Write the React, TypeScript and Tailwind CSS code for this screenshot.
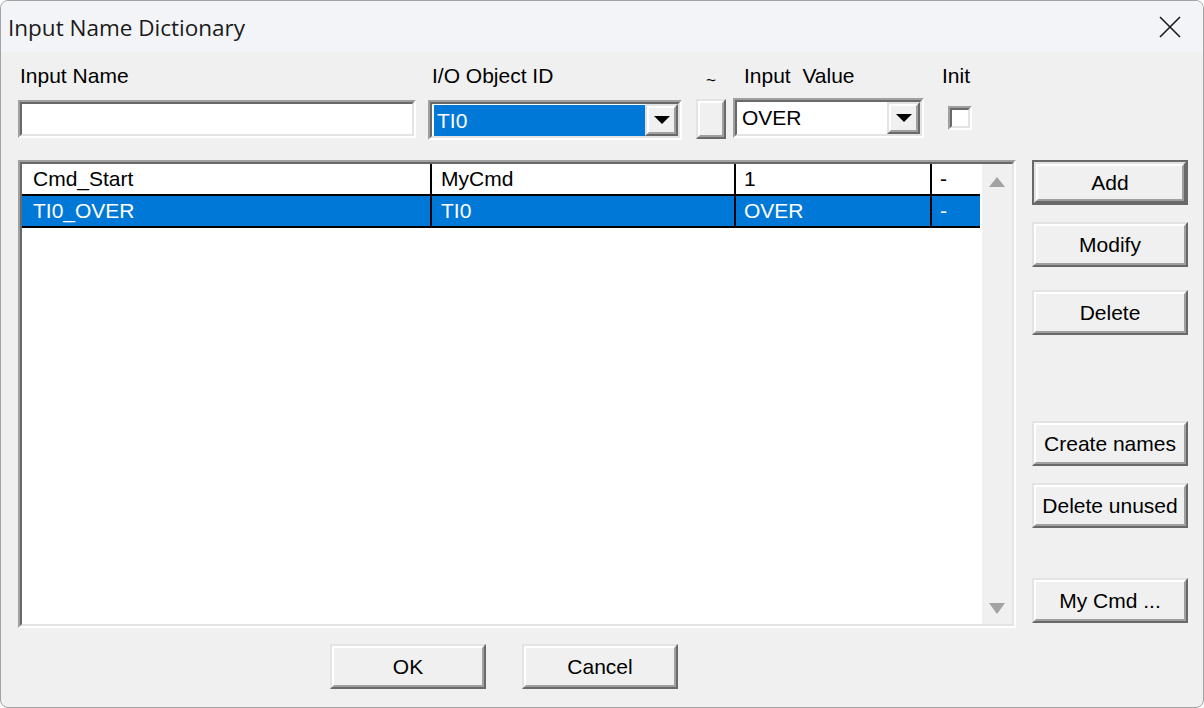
import React from "react";

const FONT = "font-['Liberation_Sans',Arial,sans-serif] text-[21px] text-black";

function Sunken({ className = "", innerClassName = "", children }: { className?: string; innerClassName?: string; children?: React.ReactNode }) {
  return (
    <div className={"border-2 border-t-[#a0a0a0] border-l-[#a0a0a0] border-b-white border-r-white " + className}>
      <div className={"h-full w-full border-2 border-t-[#696969] border-l-[#696969] border-b-[#e3e3e3] border-r-[#e3e3e3] " + innerClassName}>
        {children}
      </div>
    </div>
  );
}

function Raised({ className = "", children }: { className?: string; children?: React.ReactNode }) {
  return (
    <div className={"border-2 border-t-[#e3e3e3] border-l-[#e3e3e3] border-b-[#696969] border-r-[#696969] bg-[#f0f0f0] " + className}>
      <div className="h-full w-full border-2 border-t-white border-l-white border-b-[#a0a0a0] border-r-[#a0a0a0] flex items-center justify-center">
        {children}
      </div>
    </div>
  );
}

function Btn({ label, className = "", isDefault = false }: { label: string; className?: string; isDefault?: boolean }) {
  if (isDefault) {
    return (
      <div className={"w-[156px] h-[45px] border-2 border-[#696969] " + className}>
        <Raised className="h-full w-full">
          <span className="leading-[28px] whitespace-nowrap">{label}</span>
        </Raised>
      </div>
    );
  }
  return (
    <Raised className={"w-[156px] h-[45px] " + className}>
      <span className="leading-[28px] whitespace-nowrap">{label}</span>
    </Raised>
  );
}

function Arrow() {
  return (
    <svg width="16" height="8" viewBox="0 0 16 8">
      <polygon points="0,0 16,0 8,8" fill="#000" />
    </svg>
  );
}

function Combo({ text, selected, className = "" }: { text: string; selected?: boolean; className?: string }) {
  return (
    <Sunken className={className} innerClassName="bg-white flex">
      <div className={"flex-1 flex items-center " + (selected ? "ml-[2px] mt-[1px] bg-[#0078d7] text-white pl-[3px]" : "pl-[5px]")}>
        <span className="leading-[28px]">{text}</span>
      </div>
      <Raised className="w-[33px] h-full">
        <Arrow />
      </Raised>
    </Sunken>
  );
}

const rows = [
  { a: "Cmd_Start", b: "MyCmd", c: "1", d: "-", sel: false },
  { a: "TI0_OVER", b: "TI0", c: "OVER", d: "-", sel: true },
];

export default function App() {
  return (
    <div className={"w-[1204px] h-[708px] flex flex-col bg-[#f0f0f0] border border-[#a3a3a3] rounded-[8px] overflow-hidden " + FONT}>
      {/* Title bar */}
      <div className="h-[51px] flex items-center bg-[#f3f4f7] pl-[7px] pr-[22px]">
        <span className="font-['Open_Sans',sans-serif] text-[22.5px] leading-[30px] pt-[3px] text-[#1a1a1a]">Input Name Dictionary</span>
        <div className="flex-1" />
        <svg width="22" height="22" viewBox="0 0 22 22" className="mt-[1px]">
          <path d="M1 1 L21 21 M21 1 L1 21" stroke="#1a1a1a" strokeWidth="1.6" />
        </svg>
      </div>

      {/* Body */}
      <div className="flex flex-col pl-[17px]">
        {/* Labels */}
        <div className="flex mt-[10px] h-[28px] leading-[28px] whitespace-pre">
          <div className="w-[398px] pl-[2px]">Input Name</div>
          <div className="ml-[12px] w-[254px] pl-[4px]">I/O Object ID</div>
          <div className="ml-[14px] w-[30px] text-center text-[17px] pt-[5px]">~</div>
          <div className="ml-[7px] w-[191px] pl-[11px]">{"Input  Value"}</div>
          <div className="ml-[18px]">Init</div>
        </div>

        {/* Inputs */}
        <div className="flex items-start mt-[10px] h-[40px]">
          <Sunken className="w-[398px] h-[38px]" innerClassName="bg-white" />
          <Combo text="TI0" selected className="ml-[12px] w-[254px] h-[40px]" />
          <Raised className="ml-[14px] w-[30px] h-[40px] -mt-[1px]" />
          <Combo text="OVER" className="ml-[7px] w-[191px] h-[40px] -mt-[2px]" />
          <Sunken className="ml-[24px] mt-[6px] w-[24px] h-[24px]" innerClassName="bg-white" />
        </div>

        {/* Main */}
        <div className="flex mt-[20px]">
          <Sunken className="w-[998px] h-[468px]" innerClassName="flex bg-white">
            <div className="flex-1 bg-white">
              {rows.map((r) => (
                <div
                  key={r.a}
                  className={"w-[958px] h-[32px] flex border-b-2 border-black leading-[30px] " + (r.sel ? "bg-[#0078d7] text-white" : "bg-white")}
                >
                  <div className="w-[410px] border-r-2 border-black pl-[11px]">{r.a}</div>
                  <div className="w-[304px] border-r-2 border-black pl-[9px]">{r.b}</div>
                  <div className="w-[196px] border-r-2 border-black pl-[8px]">{r.c}</div>
                  <div className="w-[48px] pl-[8px]">{r.d}</div>
                </div>
              ))}
            </div>
            <div className="w-[30px] bg-[#f0f0f0] flex flex-col items-center justify-between pt-[13px] pb-[10px]">
              <svg width="16" height="10" viewBox="0 0 16 10">
                <polygon points="8,0 16,10 0,10" fill="#a3a3a3" />
              </svg>
              <svg width="16" height="11" viewBox="0 0 16 11">
                <polygon points="0,0 16,0 8,11" fill="#a3a3a3" />
              </svg>
            </div>
          </Sunken>

          <div className="ml-[16px] flex flex-col">
            <Btn label="Add" isDefault />
            <Btn label="Modify" className="mt-[17px]" />
            <Btn label="Delete" className="mt-[23px]" />
            <Btn label="Create names" className="mt-[86px]" />
            <Btn label="Delete unused" className="mt-[17px]" />
            <Btn label="My Cmd ..." className="mt-[50px]" />
          </div>
        </div>

        {/* Bottom */}
        <div className="flex mt-[16px] pl-[312px]">
          <Btn label="OK" />
          <Btn label="Cancel" className="ml-[36px]" />
        </div>
      </div>
    </div>
  );
}
